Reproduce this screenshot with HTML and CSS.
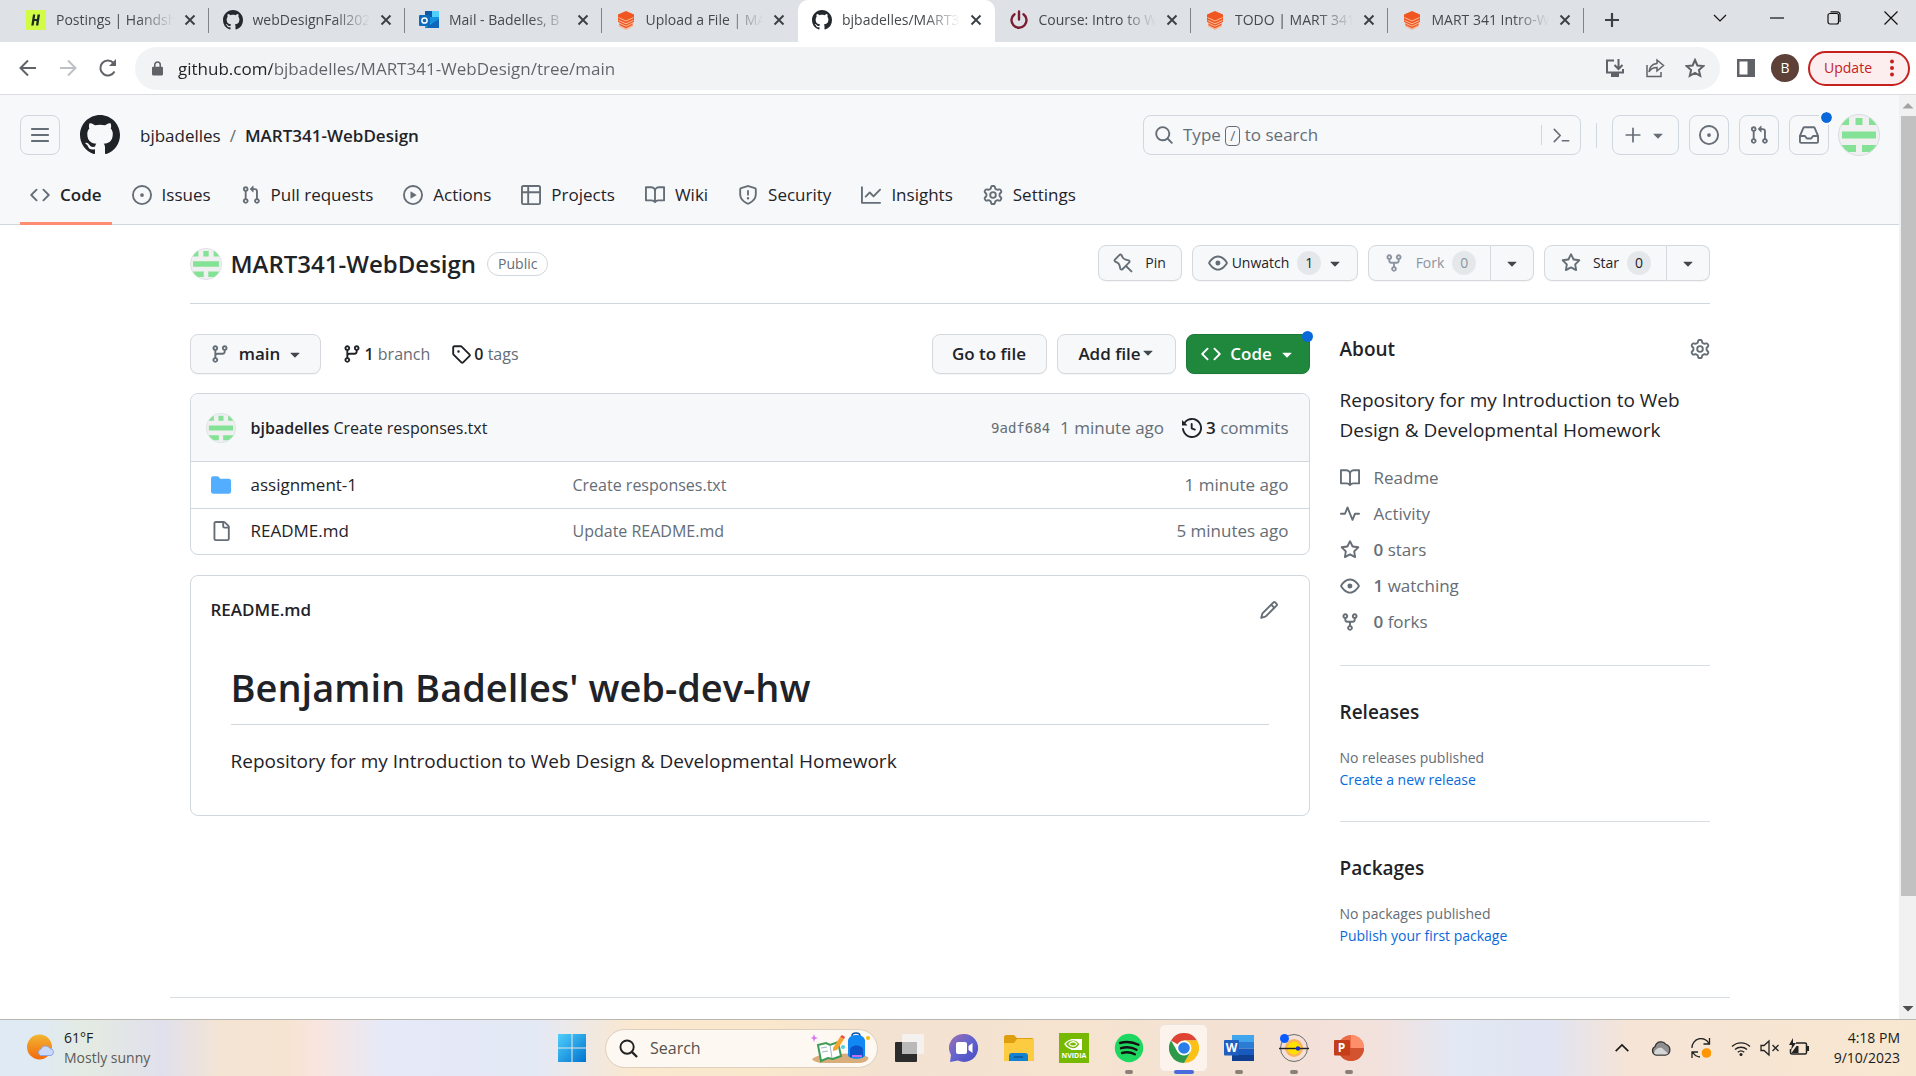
FILE: index.html
```html
<!DOCTYPE html>
<html lang="en">
<head>
<meta charset="utf-8">
<title>bjbadelles/MART341-WebDesign</title>
<link rel="stylesheet" href="styles.css">
</head>
<body>
<svg class="sprite" aria-hidden="true">
  <symbol id="i-github" viewBox="0 0 16 16"><path d="M8 0c4.42 0 8 3.58 8 8a8.013 8.013 0 0 1-5.45 7.59c-.4.08-.55-.17-.55-.38 0-.27.01-1.13.01-2.2 0-.75-.25-1.23-.54-1.48 1.78-.2 3.65-.88 3.65-3.95 0-.88-.31-1.59-.82-2.15.08-.2.36-1.02-.08-2.12 0 0-.67-.22-2.2.82-.64-.18-1.32-.27-2-.27-.68 0-1.36.09-2 .27-1.53-1.03-2.2-.82-2.2-.82-.44 1.1-.16 1.92-.08 2.12-.51.56-.82 1.28-.82 2.15 0 3.06 1.86 3.75 3.64 3.95-.23.2-.44.55-.51 1.07-.46.21-1.61.55-2.33-.66-.15-.24-.6-.83-1.23-.82-.67.01-.27.38.01.53.34.19.73.9.82 1.13.16.45.68 1.31 2.69.94 0 .67.01 1.3.01 1.49 0 .21-.15.45-.55.38A7.995 7.995 0 0 1 0 8c0-4.42 3.58-8 8-8Z"/></symbol>
  <symbol id="i-code" viewBox="0 0 16 16"><path d="m11.28 3.22 4.25 4.25a.75.75 0 0 1 0 1.06l-4.25 4.25a.749.749 0 0 1-1.275-.326.749.749 0 0 1 .215-.734L13.94 8l-3.72-3.72a.749.749 0 0 1 .326-1.275.749.749 0 0 1 .734.215Zm-6.56 0a.751.751 0 0 1 1.042.018.751.751 0 0 1 .018 1.042L2.06 8l3.72 3.72a.749.749 0 0 1-.326 1.275.749.749 0 0 1-.734-.215L.47 8.53a.75.75 0 0 1 0-1.06Z"/></symbol>
  <symbol id="i-issue" viewBox="0 0 16 16"><path d="M8 9.5a1.5 1.5 0 1 0 0-3 1.5 1.5 0 0 0 0 3Z"/><path d="M8 0a8 8 0 1 1 0 16A8 8 0 0 1 8 0ZM1.5 8a6.5 6.5 0 1 0 13 0 6.5 6.5 0 0 0-13 0Z"/></symbol>
  <symbol id="i-pr" viewBox="0 0 16 16"><path d="M1.5 3.25a2.25 2.25 0 1 1 3 2.122v5.256a2.251 2.251 0 1 1-1.5 0V5.372A2.25 2.25 0 0 1 1.5 3.25Zm5.677-.177L9.573.677A.25.25 0 0 1 10 .854V2.5h1A2.5 2.5 0 0 1 13.5 5v5.628a2.251 2.251 0 1 1-1.5 0V5a1 1 0 0 0-1-1h-1v1.646a.25.25 0 0 1-.427.177L7.177 3.427a.25.25 0 0 1 0-.354ZM3.75 2.5a.75.75 0 1 0 0 1.5.75.75 0 0 0 0-1.5Zm0 9.5a.75.75 0 1 0 0 1.5.75.75 0 0 0 0-1.5Zm8.25.75a.75.75 0 1 0 1.5 0 .75.75 0 0 0-1.5 0Z"/></symbol>
  <symbol id="i-play" viewBox="0 0 16 16"><path d="M8 0a8 8 0 1 1 0 16A8 8 0 0 1 8 0ZM1.5 8a6.5 6.5 0 1 0 13 0 6.5 6.5 0 0 0-13 0Zm4.879-2.773 4.264 2.559a.25.25 0 0 1 0 .428l-4.264 2.559A.25.25 0 0 1 6 10.559V5.442a.25.25 0 0 1 .379-.215Z"/></symbol>
  <symbol id="i-table" viewBox="0 0 16 16"><path d="M0 1.75C0 .784.784 0 1.75 0h12.5C15.216 0 16 .784 16 1.75v12.5A1.75 1.75 0 0 1 14.25 16H1.75A1.75 1.75 0 0 1 0 14.25ZM6.5 6.5v8h7.75a.25.25 0 0 0 .25-.25V6.5Zm8-1.5V1.75a.25.25 0 0 0-.25-.25H6.5V5Zm-13 1.5v7.75c0 .138.112.25.25.25H5v-8ZM5 5V1.5H1.75a.25.25 0 0 0-.25.25V5Z"/></symbol>
  <symbol id="i-book" viewBox="0 0 16 16"><path d="M0 1.75A.75.75 0 0 1 .75 1h4.253c1.227 0 2.317.59 3 1.501A3.743 3.743 0 0 1 11.006 1h4.245a.75.75 0 0 1 .75.75v10.5a.75.75 0 0 1-.75.75h-4.507a2.25 2.25 0 0 0-1.591.659l-.622.621a.75.75 0 0 1-1.06 0l-.622-.621A2.25 2.25 0 0 0 5.258 13H.75a.75.75 0 0 1-.75-.75Zm7.251 10.324.004-5.073-.002-2.253A2.25 2.25 0 0 0 5.003 2.5H1.5v9h3.757a3.75 3.75 0 0 1 1.994.574ZM8.755 4.75l-.004 7.322a3.752 3.752 0 0 1 1.992-.572H14.5v-9h-3.495a2.25 2.25 0 0 0-2.25 2.25Z"/></symbol>
  <symbol id="i-shield" viewBox="0 0 16 16"><path d="M7.467.133a1.748 1.748 0 0 1 1.066 0l5.25 1.68A1.75 1.75 0 0 1 15 3.48V7c0 1.566-.32 3.182-1.303 4.682-.983 1.498-2.585 2.813-5.032 3.855a1.697 1.697 0 0 1-1.33 0c-2.447-1.042-4.049-2.357-5.032-3.855C1.32 10.182 1 8.566 1 7V3.48a1.75 1.75 0 0 1 1.217-1.667Zm.61 1.429a.25.25 0 0 0-.153 0l-5.25 1.68a.25.25 0 0 0-.174.238V7c0 1.358.275 2.666 1.057 3.86.784 1.194 2.121 2.34 4.366 3.297a.196.196 0 0 0 .154 0c2.245-.956 3.582-2.104 4.366-3.298C13.225 9.666 13.5 8.36 13.5 7V3.48a.251.251 0 0 0-.174-.237l-5.25-1.68ZM8.75 4.75v3a.75.75 0 0 1-1.5 0v-3a.75.75 0 0 1 1.5 0ZM9 10.5a1 1 0 1 1-2 0 1 1 0 0 1 2 0Z"/></symbol>
  <symbol id="i-graph" viewBox="0 0 16 16"><path d="M1.5 1.75V13.5h13.75a.75.75 0 0 1 0 1.5H.75a.75.75 0 0 1-.75-.75V1.75a.75.75 0 0 1 1.5 0Zm14.28 2.53-5.25 5.25a.75.75 0 0 1-1.06 0L7 7.06 4.28 9.78a.751.751 0 0 1-1.042-.018.751.751 0 0 1-.018-1.042l3.25-3.25a.75.75 0 0 1 1.06 0L10 7.94l4.72-4.72a.751.751 0 0 1 1.042.018.751.751 0 0 1 .018 1.042Z"/></symbol>
  <symbol id="i-gear" viewBox="0 0 16 16"><path d="M8 0a8.2 8.2 0 0 1 .701.031C9.444.095 9.99.645 10.16 1.29l.288 1.107c.018.066.079.158.212.224.231.114.454.243.668.386.123.082.233.09.299.071l1.103-.303c.644-.176 1.392.021 1.82.63.27.385.506.792.704 1.218.315.675.111 1.422-.364 1.891l-.814.806c-.049.048-.098.147-.088.294.016.257.016.515 0 .772-.01.147.038.246.088.294l.814.806c.475.469.679 1.216.364 1.891a7.977 7.977 0 0 1-.704 1.217c-.428.61-1.176.807-1.82.63l-1.102-.302c-.067-.019-.177-.011-.3.071a5.909 5.909 0 0 1-.668.386c-.133.066-.194.158-.211.224l-.29 1.106c-.168.646-.715 1.196-1.458 1.26a8.006 8.006 0 0 1-1.402 0c-.743-.064-1.289-.614-1.458-1.26l-.289-1.106c-.018-.066-.079-.158-.212-.224a5.738 5.738 0 0 1-.668-.386c-.123-.082-.233-.09-.299-.071l-1.103.303c-.644.176-1.392-.021-1.82-.63a8.12 8.12 0 0 1-.704-1.218c-.315-.675-.111-1.422.363-1.891l.815-.806c.05-.048.098-.147.088-.294a6.214 6.214 0 0 1 0-.772c.01-.147-.038-.246-.088-.294l-.815-.806C.635 6.045.431 5.298.746 4.623a7.92 7.92 0 0 1 .704-1.217c.428-.61 1.176-.807 1.82-.63l1.102.302c.067.019.177.011.3-.071.214-.143.437-.272.668-.386.133-.066.194-.158.211-.224l.29-1.106C6.009.645 6.556.095 7.299.03 7.53.01 7.764 0 8 0Zm-.571 1.525c-.036.003-.108.036-.137.146l-.289 1.105c-.147.561-.549.967-.998 1.189-.173.086-.34.183-.5.29-.417.278-.97.423-1.529.27l-1.103-.303c-.109-.03-.175.016-.195.045-.22.312-.412.644-.573.99-.014.031-.021.11.059.19l.815.806c.411.406.562.957.53 1.456a4.709 4.709 0 0 0 0 .582c.032.499-.119 1.05-.53 1.456l-.815.806c-.081.08-.073.159-.059.19.162.346.353.677.573.989.02.03.085.076.195.046l1.102-.303c.56-.153 1.113-.008 1.53.27.161.107.328.204.501.29.447.222.85.629.997 1.189l.289 1.105c.029.109.101.143.137.146a6.6 6.6 0 0 0 1.142 0c.036-.003.108-.036.137-.146l.289-1.105c.147-.561.549-.967.998-1.189.173-.086.34-.183.5-.29.417-.278.97-.423 1.529-.27l1.103.303c.109.029.175-.016.195-.045.22-.313.411-.644.573-.99.014-.031.021-.11-.059-.19l-.815-.806c-.411-.406-.562-.957-.53-1.456a4.709 4.709 0 0 0 0-.582c-.032-.499.119-1.05.53-1.456l.815-.806c.081-.08.073-.159.059-.19a6.464 6.464 0 0 0-.573-.989c-.02-.03-.085-.076-.195-.046l-1.102.303c-.56.153-1.113.008-1.53-.27a4.44 4.44 0 0 0-.501-.29c-.447-.222-.85-.629-.997-1.189l-.289-1.105c-.029-.11-.101-.143-.137-.146a6.6 6.6 0 0 0-1.142 0ZM11 8a3 3 0 1 1-6 0 3 3 0 0 1 6 0ZM9.5 8a1.5 1.5 0 1 0-3.001.001A1.5 1.5 0 0 0 9.5 8Z"/></symbol>
  <symbol id="i-branch" viewBox="0 0 16 16"><path d="M9.5 3.25a2.25 2.25 0 1 1 3 2.122V6A2.5 2.5 0 0 1 10 8.5H6a1 1 0 0 0-1 1v1.128a2.251 2.251 0 1 1-1.5 0V5.372a2.25 2.25 0 1 1 1.5 0v1.836A2.493 2.493 0 0 1 6 7h4a1 1 0 0 0 1-1v-.628A2.25 2.25 0 0 1 9.5 3.25Zm-6 0a.75.75 0 1 0 1.5 0 .75.75 0 0 0-1.5 0Zm8.25-.75a.75.75 0 1 0 0 1.5.75.75 0 0 0 0-1.5ZM4.25 12a.75.75 0 1 0 0 1.5.75.75 0 0 0 0-1.5Z"/></symbol>
  <symbol id="i-tag" viewBox="0 0 16 16"><path d="M1 7.775V2.75C1 1.784 1.784 1 2.75 1h5.025c.464 0 .91.184 1.238.513l6.25 6.25a1.75 1.75 0 0 1 0 2.474l-5.026 5.026a1.75 1.75 0 0 1-2.474 0l-6.25-6.25A1.752 1.752 0 0 1 1 7.775Zm1.5 0c0 .066.026.13.073.177l6.25 6.25a.25.25 0 0 0 .354 0l5.025-5.025a.25.25 0 0 0 0-.354l-6.25-6.25a.25.25 0 0 0-.177-.073H2.75a.25.25 0 0 0-.25.25ZM6 5a1 1 0 1 1 0 2 1 1 0 0 1 0-2Z"/></symbol>
  <symbol id="i-history" viewBox="0 0 16 16"><path d="m.427 1.927 1.215 1.215a8.002 8.002 0 1 1-1.6 5.685.75.75 0 1 1 1.493-.154 6.5 6.5 0 1 0 1.18-4.458l1.358 1.358A.25.25 0 0 1 3.896 6H.25A.25.25 0 0 1 0 5.75V2.104a.25.25 0 0 1 .427-.177ZM7.75 4a.75.75 0 0 1 .75.75v2.992l2.028.812a.75.75 0 0 1-.557 1.392l-2.5-1A.751.751 0 0 1 7 8.25v-3.5A.75.75 0 0 1 7.75 4Z"/></symbol>
  <symbol id="i-folder" viewBox="0 0 16 16"><path d="M1.75 1A1.75 1.75 0 0 0 0 2.75v10.5C0 14.216.784 15 1.75 15h12.5A1.75 1.75 0 0 0 16 13.25v-8.5A1.75 1.75 0 0 0 14.25 3H7.5a.25.25 0 0 1-.2-.1l-.9-1.2C6.07 1.26 5.55 1 5 1H1.75Z"/></symbol>
  <symbol id="i-file" viewBox="0 0 16 16"><path d="M2 1.75C2 .784 2.784 0 3.75 0h6.586c.464 0 .909.184 1.237.513l2.914 2.914c.329.328.513.773.513 1.237v9.586A1.75 1.75 0 0 1 13.25 16h-9.5A1.75 1.75 0 0 1 2 14.25Zm1.75-.25a.25.25 0 0 0-.25.25v12.5c0 .138.112.25.25.25h9.5a.25.25 0 0 0 .25-.25V6h-2.75A1.75 1.75 0 0 1 9 4.25V1.5Zm6.75.062V4.25c0 .138.112.25.25.25h2.688l-.011-.013-2.914-2.914-.013-.011Z"/></symbol>
  <symbol id="i-pencil" viewBox="0 0 16 16"><path d="M11.013 1.427a1.75 1.75 0 0 1 2.474 0l1.086 1.086a1.75 1.75 0 0 1 0 2.474l-8.61 8.61c-.21.21-.47.364-.756.445l-3.251.93a.75.75 0 0 1-.927-.928l.929-3.25c.081-.286.235-.547.445-.758l8.61-8.61Zm.176 4.823L9.75 4.81l-6.286 6.287a.253.253 0 0 0-.064.108l-.558 1.953 1.953-.558a.253.253 0 0 0 .108-.064Zm1.238-3.763a.25.25 0 0 0-.354 0L10.811 3.75l1.439 1.44 1.263-1.263a.25.25 0 0 0 0-.354Z"/></symbol>
  <symbol id="i-pulse" viewBox="0 0 16 16"><path d="M6 2c.306 0 .582.187.696.471L10 10.731l1.304-3.26A.751.751 0 0 1 12 7h3.25a.75.75 0 0 1 0 1.5h-2.742l-1.812 4.528a.751.751 0 0 1-1.392 0L6 4.77 4.696 8.03A.75.75 0 0 1 4 8.5H.75a.75.75 0 0 1 0-1.5h2.742l1.812-4.529A.751.751 0 0 1 6 2Z"/></symbol>
  <symbol id="i-star" viewBox="0 0 16 16"><path d="M8 .25a.75.75 0 0 1 .673.418l1.882 3.815 4.21.612a.75.75 0 0 1 .416 1.279l-3.046 2.97.719 4.192a.751.751 0 0 1-1.088.791L8 12.347l-3.766 1.98a.75.75 0 0 1-1.088-.79l.72-4.194L.818 6.374a.75.75 0 0 1 .416-1.28l4.21-.611L7.327.668A.75.75 0 0 1 8 .25Zm0 2.445L6.615 5.5a.75.75 0 0 1-.564.41l-3.097.45 2.24 2.184a.75.75 0 0 1 .216.664l-.528 3.084 2.769-1.456a.75.75 0 0 1 .698 0l2.77 1.456-.53-3.084a.75.75 0 0 1 .216-.664l2.24-2.183-3.096-.45a.75.75 0 0 1-.564-.41L8 2.694Z"/></symbol>
  <symbol id="i-eye" viewBox="0 0 16 16"><path d="M8 2c1.981 0 3.671.992 4.933 2.078 1.27 1.091 2.187 2.345 2.637 3.023a1.62 1.62 0 0 1 0 1.798c-.45.678-1.367 1.932-2.637 3.023C11.67 13.008 9.981 14 8 14c-1.981 0-3.671-.992-4.933-2.078C1.797 10.83.88 9.576.43 8.898a1.62 1.62 0 0 1 0-1.798c.45-.677 1.367-1.931 2.637-3.022C4.33 2.992 6.019 2 8 2ZM1.679 7.932a.12.12 0 0 0 0 .136c.411.622 1.241 1.75 2.366 2.717C5.176 11.758 6.527 12.5 8 12.5c1.473 0 2.825-.742 3.955-1.715 1.124-.967 1.954-2.096 2.366-2.717a.12.12 0 0 0 0-.136c-.412-.621-1.242-1.75-2.366-2.717C10.824 4.242 9.473 3.5 8 3.5c-1.473 0-2.825.742-3.955 1.715-1.124.967-1.954 2.096-2.366 2.717ZM8 10a2 2 0 1 1-.001-3.999A2 2 0 0 1 8 10Z"/></symbol>
  <symbol id="i-fork" viewBox="0 0 16 16"><path d="M5 5.372v.878c0 .414.336.75.75.75h4.5a.75.75 0 0 0 .75-.75v-.878a2.25 2.25 0 1 1 1.5 0v.878a2.25 2.25 0 0 1-2.25 2.25h-1.5v2.128a2.251 2.251 0 1 1-1.5 0V8.5h-1.5A2.25 2.25 0 0 1 3.5 6.25v-.878a2.25 2.25 0 1 1 1.5 0ZM5 3.25a.75.75 0 1 0-1.5 0 .75.75 0 0 0 1.5 0Zm6.75.75a.75.75 0 1 0 0-1.5.75.75 0 0 0 0 1.5Zm-3 8.75a.75.75 0 1 0-1.5 0 .75.75 0 0 0 1.5 0Z"/></symbol>
  <symbol id="i-pin" viewBox="0 0 16 16"><path transform="matrix(-1 0 0 1 16 0)" d="m11.294.984 3.722 3.722a1.75 1.75 0 0 1-.504 2.826l-1.327.613a3.089 3.089 0 0 0-1.707 2.084l-.584 2.454c-.317 1.332-1.972 1.8-2.94.832L5.75 11.311 1.78 15.28a.749.749 0 1 1-1.06-1.06l3.969-3.97-2.204-2.204c-.968-.968-.5-2.623.832-2.94l2.454-.584a3.08 3.08 0 0 0 2.084-1.707l.613-1.327a1.75 1.75 0 0 1 2.826-.504ZM6.283 9.723l2.732 2.731a.25.25 0 0 0 .42-.119l.584-2.454a4.586 4.586 0 0 1 2.537-3.098l1.328-.613a.25.25 0 0 0 .072-.404l-3.722-3.722a.25.25 0 0 0-.404.072l-.613 1.328a4.584 4.584 0 0 1-3.098 2.537l-2.454.584a.25.25 0 0 0-.119.42l2.731 2.732Z"/></symbol>
  <symbol id="i-inbox" viewBox="0 0 16 16"><path d="M2.8 2.06A1.75 1.75 0 0 1 4.41 1h7.18c.7 0 1.333.417 1.61 1.06l2.74 6.395c.04.093.06.194.06.295v4.5A1.75 1.75 0 0 1 14.25 15H1.75A1.75 1.75 0 0 1 0 13.25v-4.5c0-.101.02-.202.06-.295Zm1.61.44a.25.25 0 0 0-.23.152L1.887 8H4.75a.75.75 0 0 1 .6.3L6.625 10h2.75l1.275-1.7a.75.75 0 0 1 .6-.3h2.863L11.82 2.652a.25.25 0 0 0-.23-.152Zm10.09 7h-2.875l-1.275 1.7a.75.75 0 0 1-.6.3h-3.5a.75.75 0 0 1-.6-.3L4.375 9.5H1.5v3.75c0 .138.112.25.25.25h12.5a.25.25 0 0 0 .25-.25Z"/></symbol>
  <symbol id="i-search" viewBox="0 0 16 16"><path d="M10.68 11.74a6 6 0 0 1-7.922-8.982 6 6 0 0 1 8.982 7.922l3.04 3.04a.749.749 0 0 1-.326 1.275.749.749 0 0 1-.734-.215ZM11.5 7a4.499 4.499 0 1 0-8.997 0A4.499 4.499 0 0 0 11.5 7Z"/></symbol>
  <symbol id="i-down" viewBox="0 0 16 16"><path d="m4.427 7.427 3.396 3.396a.25.25 0 0 0 .354 0l3.396-3.396A.25.25 0 0 0 11.396 7H4.604a.25.25 0 0 0-.177.427Z"/></symbol>
  <symbol id="i-plus" viewBox="0 0 16 16"><path d="M8 2v12M2 8h12" fill="none" stroke="currentColor" stroke-width="1.5" stroke-linecap="round"/></symbol>
  <symbol id="i-bars" viewBox="0 0 16 16"><path d="M1.500 3.200h13M1.500 8h13M1.500 12.800h13" fill="none" stroke="currentColor" stroke-width="1.5" stroke-linecap="round"/></symbol>
  <symbol id="i-prompt" viewBox="0 0 16 16"><path d="M1.200 2.200 6.800 8l-5.600 5.800M8.800 13h6" fill="none" stroke="currentColor" stroke-width="1.5" stroke-linecap="round" stroke-linejoin="round"/></symbol>
  <symbol id="i-x" viewBox="0 0 12 12"><path d="M1.500 1.500l9 9M10.500 1.500l-9 9" fill="none" stroke="currentColor" stroke-width="1.900"/></symbol>
  <symbol id="i-avatar" viewBox="0 0 42 42"><clipPath id="round"><circle cx="21" cy="21" r="20"/></clipPath><circle cx="21" cy="21" r="20.500" fill="#f0f0f0" stroke="#d8dde0" stroke-width="1"/><path clip-path="url(#round)" fill="#84e296" d="M4 4h7v7H4zM17.500 4h7v7h-7zM31 4h7v7h-7zM4 17.500h34v7H4zM4 31h14v7H4zM24 31h14v7H24z"/></symbol>
  <symbol id="i-layers" viewBox="0 0 20 20"><path fill="#f9b596" d="M3 14l7 3.500 7-3.500v2.500L10 20l-7-3.500z"/><path fill="#f0561f" d="M10 1l8 3.500v7.300l-1.500 1V15L10 18.200 3.500 15v-2.200L2 11.800V4.500z"/><path fill="none" stroke="#fbc7ae" stroke-width=".9" d="M2.500 7.600L10 11l7.500-3.400M2.500 10.400L10 13.800l7.500-3.400M3.500 13.200l6.500 3 6.500-3"/></symbol>
</svg>

<header class="tabstrip">
  <div class="tabs" role="tablist">
    <div class="tab"><svg class="fav" viewBox="0 0 20 20"><rect width="20" height="20" fill="#d2fb46"/><path d="M7 4.500h2.300L8.600 9h2.300l.7-4.500h2.400l-1.700 11H10l.6-4.400H8.300l-.7 4.400H5.300z" fill="#1b2b22"/></svg><span class="tab-title">Postings | Handsh</span><button class="x" aria-label="Close tab"><svg><use href="#i-x"/></svg></button></div>
    <div class="tab"><svg class="fav"><use href="#i-github"/></svg><span class="tab-title">webDesignFall202</span><button class="x" aria-label="Close tab"><svg><use href="#i-x"/></svg></button></div>
    <div class="tab"><svg class="fav" viewBox="0 0 20 20"><path d="M6 1h14v17H6z" fill="#1490df"/><path d="M13 1h7v6h-7z" fill="#50d0ff"/><path d="M6 1h7v6H6z" fill="#0a5cab"/><path d="M6 9l7 5 7-5v9H6z" fill="#28a8ea"/><path d="M6 18l14-9v9z" fill="#1066b8"/><rect y="5" width="11" height="11" rx="1" fill="#0f6cbd"/><circle cx="5.500" cy="10.500" r="2.600" fill="none" stroke="#fff" stroke-width="1.500"/></svg><span class="tab-title">Mail - Badelles, B</span><button class="x" aria-label="Close tab"><svg><use href="#i-x"/></svg></button></div>
    <div class="tab before-active"><svg class="fav"><use href="#i-layers"/></svg><span class="tab-title">Upload a File | MA</span><button class="x" aria-label="Close tab"><svg><use href="#i-x"/></svg></button></div>
    <div class="tab active"><svg class="fav"><use href="#i-github"/></svg><span class="tab-title">bjbadelles/MART3</span><button class="x" aria-label="Close tab"><svg><use href="#i-x"/></svg></button></div>
    <div class="tab"><svg class="fav line" viewBox="0 0 20 20" stroke="#7a1f33" stroke-width="2.400" stroke-linecap="round"><path d="M5.500 4.200a7.500 7.500 0 1 0 9 0M10 1.500v8"/></svg><span class="tab-title">Course: Intro to W</span><button class="x" aria-label="Close tab"><svg><use href="#i-x"/></svg></button></div>
    <div class="tab"><svg class="fav"><use href="#i-layers"/></svg><span class="tab-title">TODO | MART 341</span><button class="x" aria-label="Close tab"><svg><use href="#i-x"/></svg></button></div>
    <div class="tab"><svg class="fav"><use href="#i-layers"/></svg><span class="tab-title">MART 341 Intro-W</span><button class="x" aria-label="Close tab"><svg><use href="#i-x"/></svg></button></div>
    <button class="newtab" aria-label="New tab"><svg class="line" viewBox="0 0 16 16" stroke="#3c4043" stroke-width="2.200"><path d="M8 1v14M1 8h14"/></svg></button>
  </div>
  <div class="wincontrols">
    <button aria-label="Search tabs"><svg viewBox="0 0 14 14"><path d="M1 4l6 6 6-6"/></svg></button>
    <button aria-label="Minimize"><svg viewBox="0 0 14 14"><path d="M0 7h14"/></svg></button>
    <button aria-label="Restore"><svg viewBox="0 0 14 14"><rect x="1" y="2.500" width="10.500" height="10.500" rx="2"/><path d="M3.500.800h6.500a3 3 0 0 1 3 3V11"/></svg></button>
    <button aria-label="Close"><svg viewBox="0 0 14 14"><path d="M.500.500l13 13M13.500.500l-13 13"/></svg></button>
  </div>
</header>

<div class="toolbar">
  <button class="tool" aria-label="Back"><svg viewBox="0 0 20 20"><path d="M18 10H3M10 2.500L2.500 10l7.500 7.500"/></svg></button>
  <button class="tool dim" aria-label="Forward"><svg viewBox="0 0 20 20"><path d="M2 10h15M10 2.500l7.500 7.500-7.500 7.500"/></svg></button>
  <button class="tool" aria-label="Reload"><svg viewBox="0 0 20 20"><path d="M16.500 13.500A7.500 7.500 0 1 1 15.500 5"/><path d="M18 1v7h-7z" fill="currentColor" stroke="none"/></svg></button>
  <div class="omnibox">
    <svg class="lock" viewBox="0 0 12 16"><rect x="0" y="6" width="12" height="9.500" rx="1.200" fill="#5f6368"/><path d="M3 7V4a3 3 0 0 1 6 0v3" fill="none" stroke="#5f6368" stroke-width="1.700"/></svg>
    <input class="url" type="text" aria-label="Address" value="github.com/bjbadelles/MART341-WebDesign/tree/main">
    <button class="tool" aria-label="Install"><svg viewBox="0 0 20 20"><path d="M9 2.500H2v12h16V11M13.500 1v9M9.500 7l4 4 4-4M6 18h8" /><path d="M6 15h8v3H6z" fill="currentColor" stroke="none"/></svg></button>
    <button class="tool" aria-label="Share"><svg viewBox="0 0 20 20" class="thin"><path d="M2 7v11.500h14V14M12 2l6.500 5.500L12 13v-3.500C8 9.500 5.500 11 4 14c.5-5 3-8 8-8.500z"/></svg></button>
    <button class="tool" aria-label="Bookmark"><svg viewBox="0 0 20 20"><path d="M10 2l2.400 5.500 6 .5-4.500 4 1.300 5.800L10 14.800l-5.200 3L6.100 12 1.600 8l6-.500z"/></svg></button>
  </div>
  <button class="tool panel" aria-label="Side panel"><svg viewBox="0 0 18 18"><path fill="currentColor" stroke="none" d="M0 0h18v18H0zM2.500 2.500v13h8v-13z" fill-rule="evenodd"/></svg></button>
  <button class="profile">B</button>
  <button class="update">Update<svg viewBox="0 0 4 18"><circle cx="2" cy="2.500" r="2"/><circle cx="2" cy="9" r="2"/><circle cx="2" cy="15.500" r="2"/></svg></button>
</div>

<div class="viewport">
  <div class="page">
    <header class="gh-header">
      <div class="gh-top">
        <button class="sq" aria-label="Menu"><svg class="ic"><use href="#i-bars"/></svg></button>
        <a class="mark" href="#" aria-label="Homepage"><svg><use href="#i-github"/></svg></a>
        <nav class="crumbs"><a href="#">bjbadelles</a><span>/</span><a href="#" class="b">MART341-WebDesign</a></nav>
        <div class="search">
          <button class="search-main"><svg class="ic"><use href="#i-search"/></svg><span>Type <kbd>/</kbd> to search</span></button>
          <button class="search-cmd" aria-label="Command palette"><svg><use href="#i-prompt"/></svg></button>
        </div>
        <span class="vsep"></span>
        <button class="sq wide" aria-label="Create new"><svg class="ic"><use href="#i-plus"/></svg><svg class="caret"><use href="#i-down"/></svg></button>
        <button class="sq" aria-label="Issues"><svg class="ic"><use href="#i-issue"/></svg></button>
        <button class="sq" aria-label="Pull requests"><svg class="ic"><use href="#i-pr"/></svg></button>
        <button class="sq" aria-label="Inbox"><svg class="ic"><use href="#i-inbox"/></svg><i class="dot"></i></button>
        <button class="me" aria-label="Account"><svg><use href="#i-avatar"/></svg></button>
      </div>
      <nav class="gh-nav">
        <a href="#" class="sel"><svg class="ic"><use href="#i-code"/></svg>Code</a>
        <a href="#"><svg class="ic"><use href="#i-issue"/></svg>Issues</a>
        <a href="#"><svg class="ic"><use href="#i-pr"/></svg>Pull requests</a>
        <a href="#"><svg class="ic"><use href="#i-play"/></svg>Actions</a>
        <a href="#"><svg class="ic"><use href="#i-table"/></svg>Projects</a>
        <a href="#"><svg class="ic"><use href="#i-book"/></svg>Wiki</a>
        <a href="#"><svg class="ic"><use href="#i-shield"/></svg>Security</a>
        <a href="#"><svg class="ic"><use href="#i-graph"/></svg>Insights</a>
        <a href="#"><svg class="ic"><use href="#i-gear"/></svg>Settings</a>
      </nav>
    </header>

    <main class="container">
      <div class="repo-head">
        <svg class="repo-av"><use href="#i-avatar"/></svg>
        <h1><a href="#">MART341-WebDesign</a></h1>
        <span class="pill">Public</span>
        <div class="actions">
          <button class="btn sm pin"><svg class="ic"><use href="#i-pin"/></svg>Pin</button>
          <button class="btn sm watch"><svg class="ic"><use href="#i-eye"/></svg>Unwatch<span class="count">1</span><svg class="caret"><use href="#i-down"/></svg></button>
          <div class="group off"><button class="btn sm"><svg class="ic"><use href="#i-fork"/></svg>Fork<span class="count">0</span></button><button class="btn sm more" aria-label="Fork options"><svg class="caret"><use href="#i-down"/></svg></button></div>
          <div class="group"><button class="btn sm"><svg class="ic"><use href="#i-star"/></svg>Star<span class="count">0</span></button><button class="btn sm more" aria-label="Star options"><svg class="caret"><use href="#i-down"/></svg></button></div>
        </div>
      </div>

      <div class="columns">
        <section class="files">
          <div class="file-nav">
            <button class="btn main-btn"><svg class="ic"><use href="#i-branch"/></svg>main<svg class="caret"><use href="#i-down"/></svg></button>
            <a href="#" class="meta"><svg class="ic"><use href="#i-branch"/></svg><span><b>1</b> branch</span></a>
            <a href="#" class="meta"><svg class="ic"><use href="#i-tag"/></svg><span><b>0</b> tags</span></a>
            <button class="btn goto">Go to file</button>
            <button class="btn add">Add file<svg class="caret"><use href="#i-down"/></svg></button>
            <button class="btn green"><svg class="ic"><use href="#i-code"/></svg>Code<svg class="caret"><use href="#i-down"/></svg><i class="dot"></i></button>
          </div>

          <div class="box">
            <div class="commit">
              <svg class="commit-av"><use href="#i-avatar"/></svg>
              <span class="commit-title"><a href="#" class="b">bjbadelles</a> <a href="#">Create responses.txt</a></span>
              <a href="#" class="sha">9adf684</a>
              <span class="muted">1 minute ago</span>
              <a href="#" class="meta commits"><svg class="ic"><use href="#i-history"/></svg><span><b>3</b> commits</span></a>
            </div>
            <table>
              <tr><td class="c-icon"><svg class="ic blue"><use href="#i-folder"/></svg></td><td class="c-name"><a href="#">assignment-1</a></td><td class="c-msg"><a href="#">Create responses.txt</a></td><td class="c-age">1 minute ago</td></tr>
              <tr><td class="c-icon"><svg class="ic"><use href="#i-file"/></svg></td><td class="c-name"><a href="#">README.md</a></td><td class="c-msg"><a href="#">Update README.md</a></td><td class="c-age">5 minutes ago</td></tr>
            </table>
          </div>

          <article class="box readme">
            <div class="readme-head"><h2>README.md</h2><button aria-label="Edit file"><svg class="ic"><use href="#i-pencil"/></svg></button></div>
            <div class="readme-body">
              <h1>Benjamin Badelles' web-dev-hw</h1>
              <p>Repository for my Introduction to Web Design &amp; Developmental Homework</p>
            </div>
          </article>
        </section>

        <aside class="side">
          <section>
            <div class="about"><h2>About</h2><button aria-label="Edit repository details"><svg class="ic"><use href="#i-gear"/></svg></button></div>
            <p class="desc">Repository for my Introduction to Web Design &amp; Developmental Homework</p>
            <ul>
              <li><a href="#"><svg class="ic"><use href="#i-book"/></svg>Readme</a></li>
              <li><a href="#"><svg class="ic"><use href="#i-pulse"/></svg>Activity</a></li>
              <li><a href="#"><svg class="ic"><use href="#i-star"/></svg><span><b>0</b> stars</span></a></li>
              <li><a href="#"><svg class="ic"><use href="#i-eye"/></svg><span><b>1</b> watching</span></a></li>
              <li><a href="#"><svg class="ic"><use href="#i-fork"/></svg><span><b>0</b> forks</span></a></li>
            </ul>
          </section>
          <section class="small"><h2>Releases</h2><p>No releases published</p><a href="#">Create a new release</a></section>
          <section class="small"><h2>Packages</h2><p>No packages published</p><a href="#">Publish your first package</a></section>
        </aside>
      </div>
    </main>
    <footer class="foot"></footer>
  </div>
  <div class="scrollbar" aria-hidden="true">
    <svg viewBox="0 0 17 21"><path d="M3.500 13.500h11L9 8z" fill="#a3a3a3"/></svg>
    <div class="thumb"></div><div class="rest"></div>
    <svg viewBox="0 0 17 21"><path d="M3.500 8h11L9 13.500z" fill="#505050"/></svg>
  </div>
</div>

<footer class="taskbar">
  <div class="weather">
    <svg viewBox="0 0 28 28"><defs><linearGradient id="sun" x1="0" y1="0" x2="0" y2="1"><stop offset="0" stop-color="#f2b62f"/><stop offset="1" stop-color="#f2690e"/></linearGradient></defs><circle cx="12.500" cy="13" r="12.500" fill="url(#sun)"/><path d="M13.500 21.500a3.500 3.500 0 0 1 .5-6.500 5 5 0 0 1 9-.500 3.600 3.600 0 0 1 1 7z" fill="#c9d9fb" stroke="#8ba7e8"/></svg>
    <div><div>61°F</div><div class="grey">Mostly sunny</div></div>
  </div>
  <div class="dock">
    <button class="app" aria-label="Start"><svg viewBox="0 0 30 30"><defs><linearGradient id="win" x1="0" y1="0" x2="1" y2="1"><stop offset="0" stop-color="#4fd0fb"/><stop offset="1" stop-color="#0072cf"/></linearGradient></defs><path fill="url(#win)" d="M1 1h13.500v13.500H1zM15.500 1H29v13.500H15.500zM1 15.500h13.500V29H1zM15.500 15.500H29V29H15.500z"/></svg></button>
    <div class="dock-search">
      <svg class="mag" viewBox="0 0 20 20"><circle cx="8.500" cy="8.500" r="7" fill="none" stroke="#222" stroke-width="2"/><path d="M13.500 13.500l5.500 5.500" stroke="#222" stroke-width="2.400"/></svg>
      <input type="search" placeholder="Search" aria-label="Search Windows">
      <svg class="art" viewBox="0 0 60 32"><path d="M1 27c6-5 14-4 26-5s22-1 30 3c2 2-3 6-8 6H12C7 31 2 29 1 27z" fill="#d9ae7c"/><path d="M7 13l8-2 4 2 8-3 3 14-8 3-5-1-7 3z" fill="#fff" stroke="#3f9b55" stroke-width="2"/><path d="M19 13l2 13M10 16l6-1M11 20l6-1" stroke="#9fb5c0" stroke-width="1"/><path d="M22 16l7-11 4 2-7 11-4 1z" fill="#f7a531"/><path d="M29 5l2-2 3 2-1 2z" fill="#e8503a"/><path d="M0 6l2-1 1-3 1 3 3 1-3 1-1 3-1-3z" fill="#d873f3"/><circle cx="32" cy="15" r="2" fill="#4fd0e0"/><circle cx="57" cy="6" r="2" fill="#f9b90a"/><path d="M41 4c0-4 8-4 8 0" fill="none" stroke="#0b4fae" stroke-width="1.500"/><path d="M37 9c0-8 17-8 17 0v14c0 5-17 5-17 0z" fill="#1288f5"/><path d="M39 18c0-6 13-6 13 0v7H39z" fill="#0a55c9"/><path d="M41 24h10" stroke="#c46cf0" stroke-width="2"/></svg>
    </div>
    <div class="apps">
      <button class="app" aria-label="Task view"><svg viewBox="0 0 30 30"><rect x="1" y="9" width="22" height="20" rx="1" fill="#2c2c2c"/><rect x="8" y="1" width="22" height="20" rx="1" fill="#f3f3f3" fill-opacity=".85"/><path d="M8 9h15v12H8z" fill="#b9b9b9"/></svg></button>
      <button class="app" aria-label="Chat"><svg viewBox="0 0 30 30"><defs><linearGradient id="chat" x1="0" y1="0" x2="1" y2="1"><stop offset="0" stop-color="#a06fae"/><stop offset=".5" stop-color="#6263cf"/><stop offset="1" stop-color="#4a4bc0"/></linearGradient></defs><path d="M15 1a14 14 0 1 1-6 26.600L1 29l1-7A14 14 0 0 1 15 1z" fill="url(#chat)"/><rect x="7" y="9" width="11" height="12" rx="2" fill="#fff"/><path d="M19.500 13l4-3v10l-4-3z" fill="#fff"/></svg></button>
      <button class="app" aria-label="File Explorer"><svg viewBox="0 0 30 30"><path d="M0 4c0-1 1-2 2-2h8l3 3H28c1 0 2 1 2 2v5H0z" fill="#dd9f10"/><path d="M0 10h10l3-4h17v22H0z" fill="#fdcb3f"/><path d="M5 28v-5a3 3 0 0 1 3-3h13a3 3 0 0 1 3 3v5z" fill="#1381d1"/><path d="M10 24h9" stroke="#0b5796" stroke-width="1.500"/></svg></button>
      <button class="app" aria-label="NVIDIA"><svg viewBox="0 0 30 30"><rect width="30" height="30" fill="#76b900"/><path d="M12 6h11v11H12z" fill="#fff"/><path d="M6 11c4-5 11-6 15 0-3 6-10 7-15 0z" fill="#76b900" stroke="#fff" stroke-width="1.300"/><path d="M10 11c2-3 6-3 8 0-2 3-6 3-8 0z" fill="none" stroke="#fff" stroke-width="1.300"/><text x="15" y="25" text-anchor="middle" class="nv">NVIDIA</text></svg></button>
      <button class="app run" aria-label="Spotify"><svg viewBox="0 0 30 30"><circle cx="15" cy="15" r="14.200" fill="#1ed760"/><path d="M6 10c7-2 13-1 18.500 1.800M7 15.200c6-1.700 11-1 15.500 1.500M8 20c5-1.300 9-.8 12.800 1.300" fill="none" stroke="#111" stroke-width="2.400" stroke-linecap="round"/></svg></button>
      <button class="app run current" aria-label="Chrome"><svg viewBox="0 0 30 30"><path d="M15 15L2 7.500A15 15 0 0 1 28 7.500H15z" fill="#df4332"/><path d="M28 7.500A15 15 0 0 1 15 30l6.500-11.200L15 7.500z" fill="#fbc117"/><path d="M2 7.500A15 15 0 0 0 15 30l6.500-11.200H8.500z" fill="#2d9a49"/><circle cx="15" cy="15" r="7.500" fill="#fff"/><circle cx="15" cy="15" r="5.800" fill="#2b7de9"/></svg></button>
      <button class="app run" aria-label="Word"><svg viewBox="0 0 30 30"><path d="M8 2h22v7H8z" fill="#41a5ee"/><path d="M8 9h22v6.500H8z" fill="#2b7cd3"/><path d="M8 15.500h22V22H8z" fill="#185abd"/><path d="M8 22h22v6H8z" fill="#103f91"/><rect y="7" width="15" height="15.500" rx="1" fill="#1f5fc0"/><text x="7.500" y="19" text-anchor="middle" class="lt">W</text></svg></button>
      <button class="app run" aria-label="Orbit"><svg viewBox="0 0 30 30"><circle cx="15" cy="15" r="13.500" fill="none" stroke="#6b6b6b"/><circle cx="15" cy="15" r="9" fill="#ffb25c"/><circle cx="15" cy="15" r="6.500" fill="#ffe100"/><path d="M0 15.500h30" stroke="#222" stroke-width="1.400"/><circle cx="5.500" cy="5.500" r="4.500" fill="#0a5bff"/><circle cx="19" cy="15.500" r="2.200" fill="#1530d0"/></svg></button>
      <button class="app run" aria-label="PowerPoint"><svg viewBox="0 0 30 30"><circle cx="17" cy="15" r="13" fill="#ed6c47"/><path d="M17 2a13 13 0 0 1 13 13H17z" fill="#ff8f6b"/><path d="M4 15h26a13 13 0 0 1-26 0z" fill="#d35230"/><rect y="7" width="16" height="15.500" rx="1" fill="#c43e1c"/><text x="7.500" y="19" text-anchor="middle" class="lt">P</text></svg></button>
    </div>
  </div>
  <div class="tray">
    <svg class="up line" viewBox="0 0 20 20" stroke="#1b1b1b" stroke-width="1.800"><path d="M3 13.500l7-7 7 7"/></svg>
    <svg class="cloud" viewBox="0 0 20 20"><path d="M5 17a4.500 4.500 0 0 1-.800-8.500A6 6 0 0 1 15 6.500a5.500 5.500 0 0 1 0 10.500z" fill="#8f8f8f" stroke="#333" stroke-width="1.300"/><path d="M3 15c1-4 5-6 8-5l6 5.500c-1 .8-2 1-3 1H6c-1.500 0-2.500-.5-3-1.500z" fill="#d6d6d6"/></svg>
    <svg class="sync line" viewBox="0 0 20 20" stroke="#222" stroke-width="1.300"><path d="M1 10a9 9 0 0 1 17-4.500M18.500 0v6h-6M9 19A9 9 0 0 1 2 14.500M1 20v-6h6"/><circle cx="15.500" cy="15" r="4.800" fill="#ff9500" stroke="none"/></svg>
    <svg class="wifi line" viewBox="0 0 20 20" stroke="#222" stroke-width="1.400"><path d="M1 8.500a13 13 0 0 1 18 0M4 11.500a9 9 0 0 1 12 0M6.800 14.200a5 5 0 0 1 6.400 0"/><circle cx="10" cy="16.500" r="1.500" fill="#222" stroke="none"/></svg>
    <svg class="mute line" viewBox="0 0 20 20" stroke="#222" stroke-width="1.300"><path d="M1 7.500h3L9 3v14l-5-4.500H1zM12.500 7l6 6M18.500 7l-6 6"/></svg>
    <svg class="batt line" viewBox="0 0 20 20" stroke="#222" stroke-width="1.500"><path d="M7 5h9a1.500 1.500 0 0 1 1.500 1.500v8A1.500 1.500 0 0 1 16 16H3a1.500 1.500 0 0 1-1.500-1.500V11"/><path d="M2.500 15l5-7h2v7zM4 0L0 7h3l-1 5 5-7H4zM18 8h2v5h-2z" fill="#222" stroke="none"/></svg>
    <div class="clock"><div>4:18 PM</div><div>9/10/2023</div></div>
  </div>
</footer>
</body>
</html>
```
FILE: styles.css
```css
:root {
  --fg: #1f2328;
  --muted: #656d76;
  --line: #d0d7de;
  --subtle: #f6f8fa;
  --blue: #0969da;
}
* { box-sizing: border-box; }
body {
  margin: 0;
  height: 100vh;
  display: flex;
  flex-direction: column;
  overflow: hidden;
  background: #fff;
  color: var(--fg);
  font: 16px/24px "Open Sans", "Noto Sans", sans-serif;
}
a { color: inherit; text-decoration: none; }
button, input { font: inherit; color: inherit; background: none; border: 0; padding: 0; margin: 0; outline: 0; }
button { display: flex; align-items: center; justify-content: center; white-space: nowrap; }
svg { display: block; fill: currentColor; flex: none; }
svg.line { fill: none; }
h1, h2, p, ul { margin: 0; padding: 0; }
b, .b { font-weight: 600; }
.sprite { position: absolute; width: 0; height: 0; }
.ic { width: 20px; height: 20px; color: var(--muted); }
.caret { width: 20px; height: 20px; }

/* tab strip */
.tabstrip { display: flex; justify-content: space-between; height: 42px; background: #dee1e6; font-size: 14px; color: #45494d; }
.tabs { display: flex; padding-left: 12px; flex: 0 1 1640px; min-width: 0; }
.tab { display: flex; align-items: center; flex: 1 1 0; min-width: 0; gap: 10px; padding: 0 13px 2px 14px; background: linear-gradient(#808387, #808387) right 8px / 1px 25px no-repeat; }
.tab.active { background: #fff; border-radius: 10px 10px 0 0; }
.tab.before-active { background: none; }
.fav { width: 20px; height: 20px; color: #24292f; }
.tab-title { flex: 1; min-width: 0; overflow: hidden; white-space: nowrap; mask-image: linear-gradient(90deg, #000 calc(100% - 36px), transparent); }
.x svg { width: 12px; height: 12px; color: #3c4043; }
.newtab { width: 56px; height: 40px; }
.newtab svg { width: 16px; height: 16px; }
.wincontrols { display: flex; height: 36px; }
.wincontrols button { width: 57px; padding-left: 6px; }
.wincontrols svg { width: 14px; height: 14px; fill: none; stroke: #111; stroke-width: 1.2; }

/* toolbar */
.toolbar { display: flex; align-items: center; height: 53px; padding: 0 6px 0 17px; border-bottom: 1px solid #dadce0; flex: none; }
.tool { width: 40px; height: 40px; color: #5f6368; }
.toolbar > .tool { padding-right: 19px; }
.tool svg { width: 20px; height: 20px; fill: none; stroke: currentColor; stroke-width: 2; }
.tool svg.thin { stroke-width: 1.5; }
.tool.dim { color: #bdc1c6; }
.omnibox { flex: 1; display: flex; align-items: center; height: 43px; border-radius: 22px; background: #f1f3f4; padding: 0 5px 0 17px; margin: 0 17px 0 -2px; }
.lock { width: 11px; height: 15px; margin-right: 15px; }
.url { flex: 1; min-width: 0; height: 28px; color: #5f6368; font-size: 17px; background: linear-gradient(90deg, #202124 94px, #5f6368 94px); background-clip: text; -webkit-text-fill-color: transparent; }
.toolbar > .tool.panel { width: 18px; padding: 0; }
.panel svg { width: 18px; height: 18px; }
.profile { width: 28px; height: 28px; border-radius: 50%; background: #5d4037; color: #fff; font-size: 14px; margin: 0 9px 0 16px; }
.update { height: 35px; gap: 18px; padding: 0 14px; border: 2px solid #c5221f; border-radius: 18px; background: #fceeee; color: #c5221f; font-size: 14px; }
.update svg { width: 4px; height: 18px; }

/* page frame */
.viewport { flex: 1; min-height: 0; display: flex; overflow: hidden; }
.page { flex: 1; min-width: 0; }
.scrollbar { width: 17px; background: #f1f1f1; display: flex; flex-direction: column; }
.scrollbar svg { width: 17px; height: 21px; }
.thumb { flex: 780; background: #c1c1c1; margin-left: 2px; }
.rest { flex: 102; }

/* site header */
.gh-header { background: var(--subtle); border-bottom: 1px solid var(--line); padding: 0 19px 0 20px; }
.gh-top { display: flex; align-items: center; height: 80px; }
.sq { position: relative; width: 40px; height: 40px; border: 1px solid var(--line); border-radius: 8px; margin-right: 10px; }
.sq:first-child { margin-right: 20px; }
.sq:nth-last-child(2) { margin-right: 9px; }
.sq.wide { width: 67px; gap: 6px; }
.sq.wide .ic { width: 18px; height: 18px; }
.sq .caret { color: var(--muted); }
.mark svg { width: 40px; height: 40px; }
.crumbs { display: flex; gap: 9px; margin-left: 20px; padding-top: 2px; font-size: 17px; }
.crumbs span { color: var(--muted); }
.search { display: flex; flex: 0 1 438px; height: 40px; margin-left: auto; border: 1px solid var(--line); border-radius: 8px; color: var(--muted); }
.search-main { flex: 1; justify-content: flex-start; gap: 9px; padding-left: 10px; font-size: 17px; }
kbd { display: inline-block; font: 14px/18px "Open Sans", sans-serif; border: 1px solid var(--muted); border-radius: 4px; padding: 0 4px; }
.search-cmd { width: 39px; align-self: center; height: 20px; border-left: 1px solid var(--line); }
.search-cmd svg { width: 17px; height: 17px; }
.vsep { width: 1px; height: 25px; background: var(--line); margin: 0 15px; }
.dot { position: absolute; top: -4px; right: -4px; width: 11px; height: 11px; border-radius: 50%; background: var(--blue); }
.sq .dot { outline: 2px solid var(--subtle); }
.me svg { width: 42px; height: 42px; }
.gh-nav { display: flex; gap: 10px; height: 49px; }
.gh-nav a { display: flex; gap: 10px; align-items: center; padding: 0 10px 7px; border-bottom: 3px solid transparent; margin-bottom: -1px; white-space: nowrap; font-size: 17px; }
.gh-nav .sel { font-weight: 600; border-bottom-color: #fd8c73; }

/* repository */
.container { max-width: 1600px; margin: 0 auto; padding: 0 40px; }
.repo-head { display: flex; align-items: center; height: 79px; border-bottom: 1px solid var(--line); }
.repo-av { width: 32px; height: 32px; margin-right: 9px; }
.repo-head h1 { font-size: 24px; line-height: 36px; font-weight: 600; margin-right: 11px; }
.pill { border: 1px solid var(--line); border-radius: 12px; padding: 0 10px; font-size: 14px; line-height: 22px; font-weight: 500; color: var(--muted); }
.actions { display: flex; gap: 10px; margin-left: auto; padding-bottom: 3px; }
.btn { height: 40px; border: 1px solid #d5d9dd; border-radius: 8px; background: var(--subtle); font-size: 17px; font-weight: 600; box-shadow: 0 1px 0 #1f23280a; }
.btn.sm { height: 36px; font-size: 14px; font-weight: 500; }
.btn .caret { color: #42474d; }
.count { min-width: 24px; height: 24px; line-height: 24px; border-radius: 12px; background: #e4e8eb; text-align: center; margin-left: 8px; }
.pin { width: 84px; gap: 12px; }
.watch { width: 166px; gap: 4px; padding-left: 4px; }
.watch .count { margin-left: 4px; }
.group { display: flex; }
.group .btn:first-child { width: 123px; padding-left: 2px; border-radius: 8px 0 0 8px; }
.group .btn:first-child .ic { margin-right: 12px; }
.group .more { width: 43px; border-left: 0; border-radius: 0 8px 8px 0; }
.off .btn:first-child { color: #8c959f; }
.off .ic { color: #8c959f; }

.columns { display: grid; grid-template-columns: minmax(0, 1fr) 370px; gap: 30px; padding-top: 30px; }
.file-nav { display: flex; align-items: center; gap: 10px; margin-bottom: 19px; }
.main-btn { width: 131px; gap: 5px; padding-left: 5px; }
.main-btn .ic { margin-right: 4px; }
.meta { display: flex; align-items: center; gap: 3px; color: var(--muted); margin-left: 11px; }
.meta .ic, .meta b { color: var(--fg); }
.goto { width: 115px; margin-left: auto; }
.add { width: 119px; }
.add .caret { margin: -4px -4px 0 -3px; }
.green { position: relative; width: 124px; gap: 5px; padding-left: 3px; background: #1f883d; border-color: #1b7a36; color: #fff; }
.green .ic { margin-right: 4px; }
.green .ic, .green .caret { color: #fff; }

.box { border: 1px solid var(--line); border-radius: 8px; }
.commit { display: flex; align-items: center; height: 68px; padding: 0 20px 0 15px; background: var(--subtle); border-bottom: 1px solid var(--line); border-radius: 8px 8px 0 0; font-size: 17px; }
.commit-av { width: 30px; height: 30px; margin-right: 15px; }
.commit-title { font-size: 16px; }
.sha { margin-left: auto; font: 14px/20px "DejaVu Sans Mono", monospace; color: var(--muted); margin-right: 10px; }
.muted { color: var(--muted); }
.commits { margin-left: 18px; gap: 4px; }
table { width: 100%; border-collapse: collapse; font-size: 17px; }
td { height: 46px; padding: 0; }
tr + tr td { border-top: 1px solid var(--line); }
.c-icon { width: 60px; padding-left: 20px; }
.c-name { width: 322px; }
.c-msg, .c-age { color: var(--muted); }
.c-msg { font-size: 16px; }
.c-age { text-align: right; padding-right: 20px; }
.blue { color: #54aeff; }
.readme { margin-top: 20px; }
.readme-head { display: flex; justify-content: space-between; align-items: center; height: 68px; padding: 0 30px 0 20px; }
.readme-head h2 { font-size: 17px; font-weight: 600; }
.readme-body { padding: 18px 40px 38px; }
.readme-body h1 { font-size: 38px; line-height: 50px; font-weight: 600; padding-bottom: 12px; border-bottom: 1px solid var(--line); margin-bottom: 20px; }
.readme-body p { font-size: 19px; line-height: 32px; }

.side h2 { font-size: 19px; line-height: 30px; font-weight: 600; }
.about { display: flex; justify-content: space-between; align-items: center; margin-bottom: 21px; }
.desc { font-size: 19px; line-height: 30px; margin-bottom: 21px; }
.side ul { list-style: none; display: grid; gap: 12px; font-size: 17px; color: var(--muted); margin-bottom: 31px; }
.side li a { display: flex; align-items: center; gap: 14px; }
.small { border-top: 1px solid #d8dee4; padding: 31px 0 30px; font-size: 14px; line-height: 22px; color: var(--muted); }
.small h2 { color: var(--fg); margin-bottom: 20px; }
.small a { color: var(--blue); display: block; }
.foot { max-width: 1560px; margin: 20px auto 0; border-top: 1px solid #d8dee4; }

/* taskbar */
.taskbar {
  flex: none; height: 57px; display: grid; grid-template-columns: 1fr auto 1fr; align-items: center;
  border-top: 1px solid #b9b5b0; font-size: 14px; line-height: 20px; color: #1b1b1b;
  background: linear-gradient(90deg, #dfeaf5 0, #dfeaf3 2%, #e4ebe2 4.5%, #e0e0ec 8.5%, #f4e4d4 11.5%, #f6e4d2 15%, #f9e5de 16.5%, #e6e9f7 20%, #e4e9f6 28%, #fae8d0 33%, #f9e8cb 40%, #f3e1d2 47%, #f6e4d0 56%, #f3e1d4 64%, #f3e1dd 72%, #e2e8f4 76%, #e1e4f2 81%, #f6e4d6 85%, #f8e7d0 100%);
}
.weather { display: flex; align-items: center; gap: 9px; padding-left: 27px; }
.weather svg { width: 28px; height: 28px; }
.grey { color: #5c5a58; }
.dock { display: flex; align-items: center; height: 56px; padding-left: 4px; }
.app { position: relative; width: 55px; height: 50px; }
.app svg { width: 30px; height: 30px; }
.dock-search { display: flex; align-items: center; width: 273px; height: 39px; margin: 0 3px 0 6px; padding: 0 6px 0 13px; border: 1px solid #dccfbd; border-radius: 20px; background: #fdf8f1; }
.mag { width: 19px; height: 19px; margin-right: 12px; }
.dock-search input { flex: 1; min-width: 0; font-size: 16px; }
.dock-search input::placeholder { color: #55524f; }
.art { width: 60px; height: 32px; }
.apps { display: flex; }
.run::after { content: ""; position: absolute; bottom: -1px; left: 24px; width: 8px; height: 4px; border-radius: 2px; background: #8a8078; }
.current::before { content: ""; position: absolute; inset: 1px 3px; border: 1px solid #efe2d8; border-radius: 6px; background: #fbf3ec; }
.current svg { position: relative; }
.current::after { left: 18px; width: 20px; background: #4a6bdc; }
.nv { font: 700 7px "Open Sans", sans-serif; fill: #fff; }
.lt { font: 700 12px "Open Sans", sans-serif; fill: #fff; }
.tray { display: flex; justify-content: flex-end; align-items: center; gap: 9px; padding-right: 16px; }
.tray svg { width: 20px; height: 20px; }
.tray .up { width: 18px; margin-right: 11px; }
.tray .cloud, .tray .sync { margin-right: 11px; }
.clock { text-align: right; margin-left: 16px; }
```
